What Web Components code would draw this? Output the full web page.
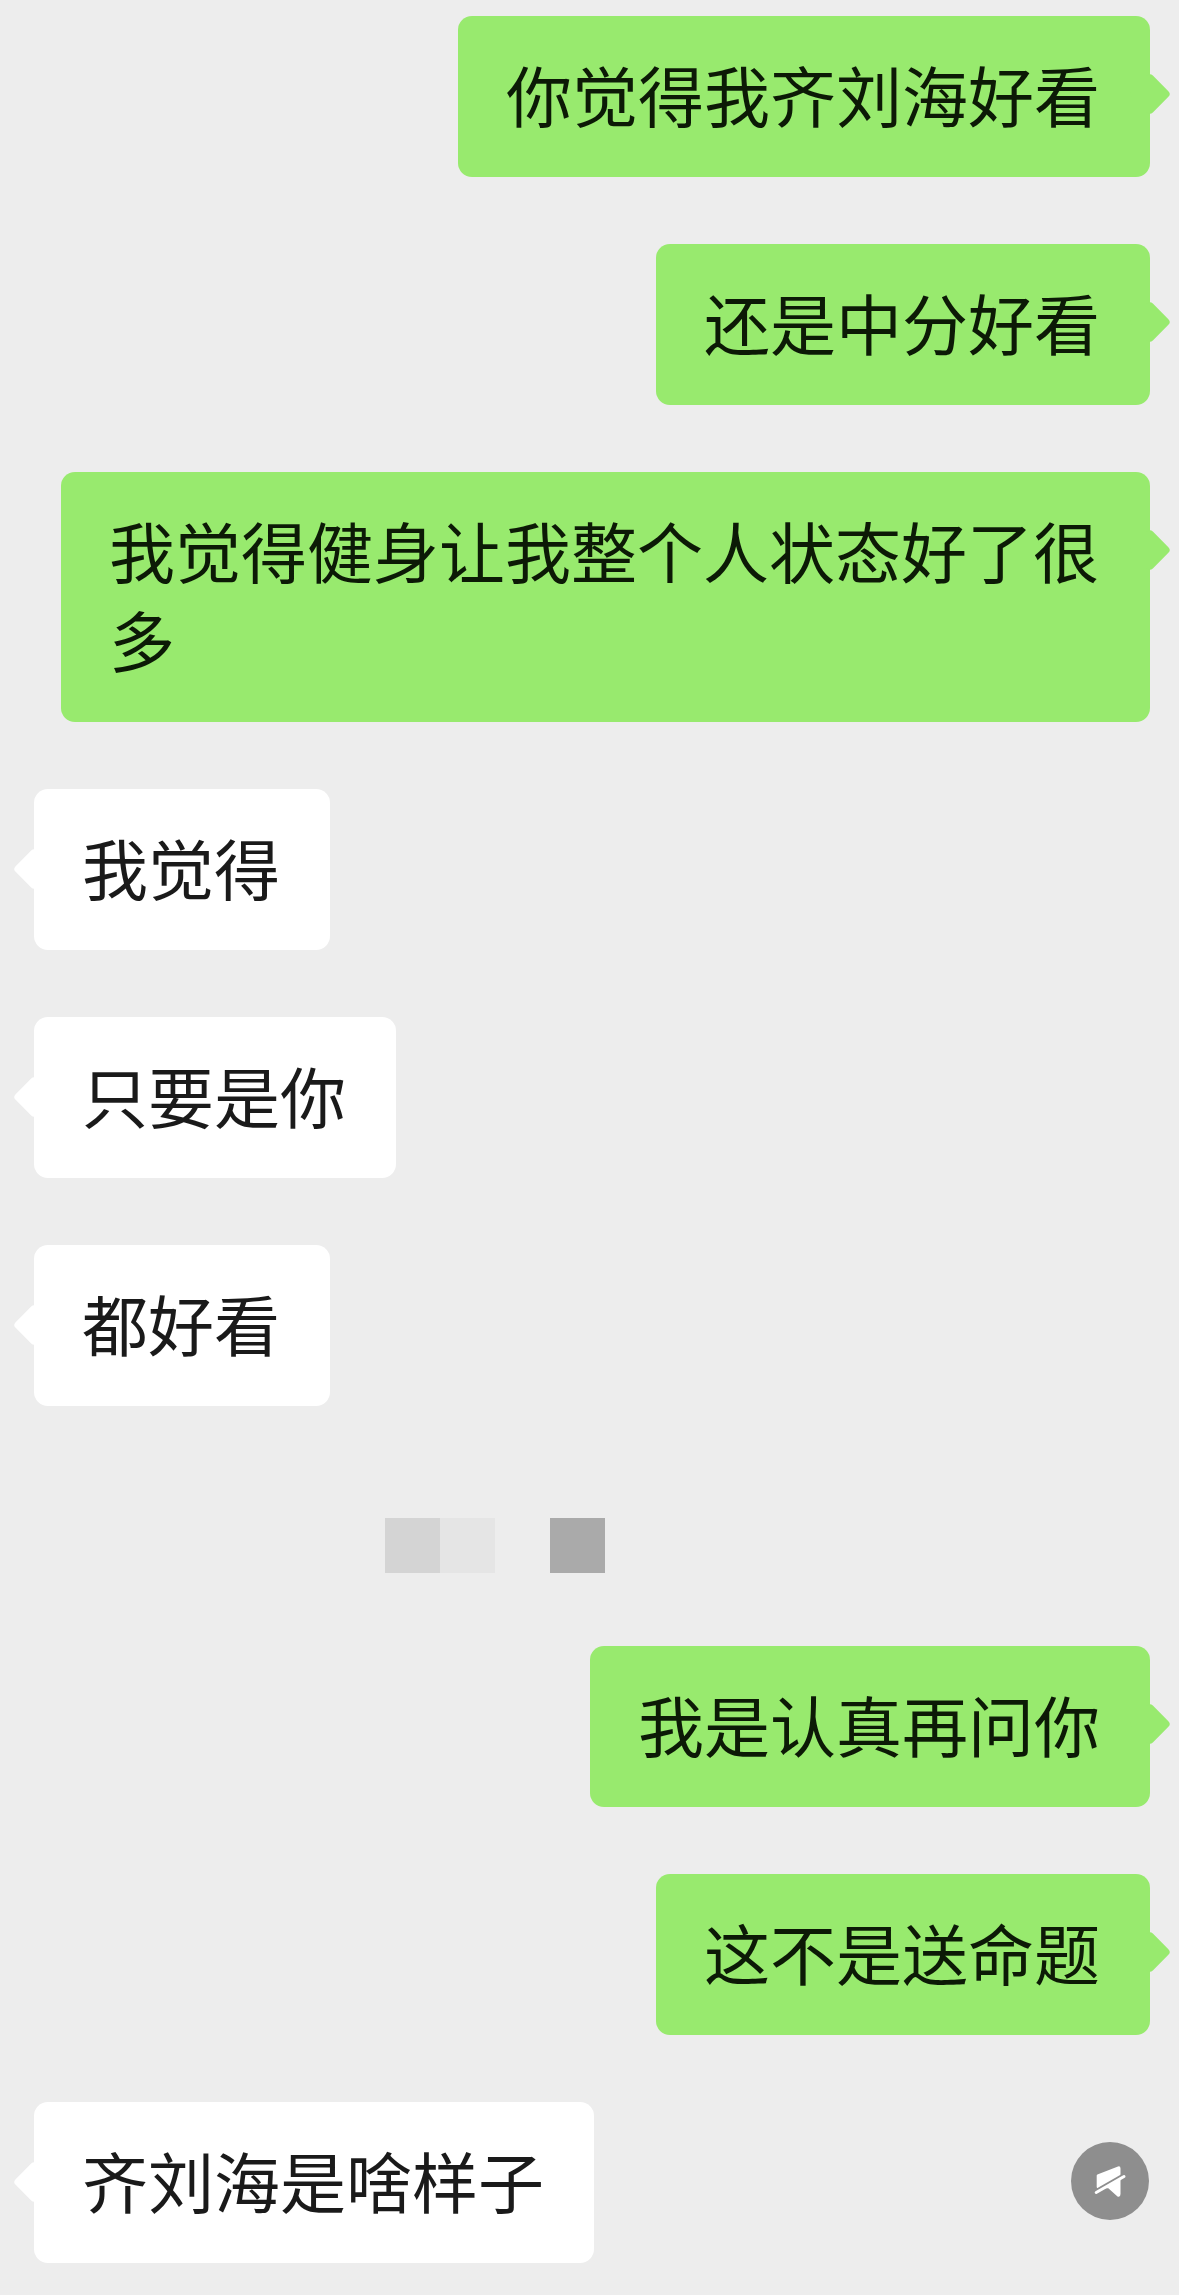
<!DOCTYPE html>
<html lang="zh-CN">
<head>
<meta charset="utf-8">
<title>聊天记录</title>
<style>
html,body{margin:0;padding:0;background:#ededed}
</style>
</head>
<body>
<chat-screen>
  <chat-bubble side="me">你觉得我齐刘海好看</chat-bubble>
  <chat-bubble side="me">还是中分好看</chat-bubble>
  <chat-bubble side="me">我觉得健身让我整个人状态好了很多</chat-bubble>
  <chat-bubble side="them">我觉得</chat-bubble>
  <chat-bubble side="them">只要是你</chat-bubble>
  <chat-bubble side="them">都好看</chat-bubble>
  <chat-redacted></chat-redacted>
  <chat-bubble side="me">我是认真再问你</chat-bubble>
  <chat-bubble side="me">这不是送命题</chat-bubble>
  <chat-bubble side="them">齐刘海是啥样子</chat-bubble>
  <mute-badge></mute-badge>
</chat-screen>
<script>
class ChatScreen extends HTMLElement{
  constructor(){super();this.attachShadow({mode:'open'}).innerHTML=`<style>
    :host{display:flex;flex-direction:column;gap:67px;position:relative;box-sizing:border-box;
      width:1179px;height:2295px;padding:16px 29px 33px 34px;background:#ededed;overflow:hidden;
      font-family:"Noto Sans CJK SC","Noto Sans CJK JP",sans-serif;color:#111;filter:blur(.5px)}
  </style><slot></slot>`}
}
class ChatBubble extends HTMLElement{
  constructor(){super();this.attachShadow({mode:'open'}).innerHTML=`<style>
    :host{display:block;position:relative;box-sizing:border-box;width:fit-content;max-width:1089px;
      padding:33px 50px 39px 48px;border-radius:14px;background:#fff;font-size:66px;line-height:89px;
      word-break:break-all}
    :host([side=me]){align-self:flex-end;background:#98ea6e;color:#0c1a06}
    :host([side=them]){align-self:flex-start;color:#1a1a1a}
    i{position:absolute;top:63px;width:30px;height:30px;border-radius:4px;background:inherit;transform:rotate(45deg)}
    :host([side=me]) i{right:-15px}
    :host([side=them]) i{left:-15px;top:65px}
  </style><i></i><slot></slot>`}
}
class ChatRedacted extends HTMLElement{
  constructor(){super();this.attachShadow({mode:'open'}).innerHTML=`<style>
    :host{display:flex;margin:45px 0 6px 351px;height:55px}
    b{display:block;width:55px;height:55px;flex:none}
    b.a{background:#d4d4d4}
    b.b{background:#e5e5e5}
    b.c{background:#aaaaaa;margin-left:55px}
  </style><b class="a"></b><b class="b"></b><b class="c"></b>`}
}
class MuteBadge extends HTMLElement{
  constructor(){super();this.attachShadow({mode:'open'}).innerHTML=`<style>
    :host{position:absolute;left:1071px;top:2142px;width:78px;height:78px;display:block}
    svg{display:block}
  </style><svg width="78" height="78" viewBox="0 0 78 78" role="img" aria-label="静音">
    <circle cx="39" cy="39" r="39" fill="#8e8e8e"/>
    <path d="M27 32.300 L47 24.500 Q49.500 23.800 49.500 26.500 L49.500 52 Q49.500 55.500 46.500 54.500 L37.300 46.300 L27 46.300 Q25.700 46.300 25.700 45 L25.700 33.500 Q25.700 32.700 27 32.300Z" fill="#fff"/>
    <path d="M22 50.400 L56 30.800" stroke="#8e8e8e" stroke-width="3" fill="none"/>
    <path d="M25.200 50.500 L53 34.500" stroke="#fff" stroke-width="3" stroke-linecap="round" fill="none"/>
  </svg>`}
}
customElements.define('chat-screen',ChatScreen);
customElements.define('chat-bubble',ChatBubble);
customElements.define('chat-redacted',ChatRedacted);
customElements.define('mute-badge',MuteBadge);
</script>
</body>
</html>
